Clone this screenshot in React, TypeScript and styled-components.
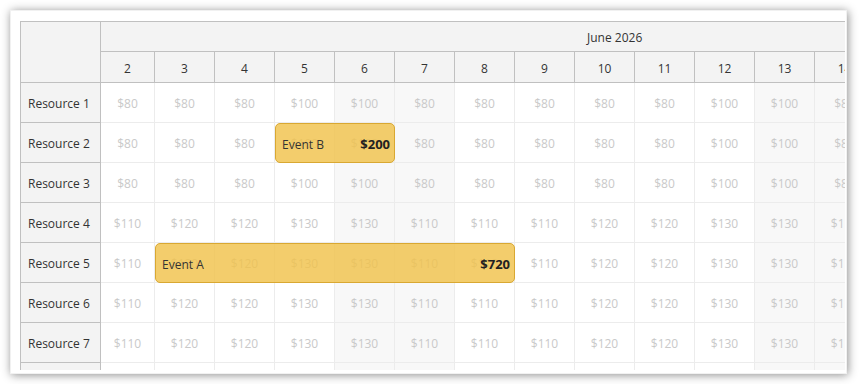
import React from 'react';
import styled, { createGlobalStyle, css } from 'styled-components';

const GlobalStyle = createGlobalStyle`
  body {
    margin: 0;
    background: #ffffff;
    font-family: "Open Sans", "Noto Sans", Arial, sans-serif;
  }
`;

const headerBorder = '#c0c0c0';
const cellBorder = '#ececec';
const headerBg = '#f3f3f3';

const COLUMNS = '80px 54px repeat(12, 60px)';

const DAYS = [2, 3, 4, 5, 6, 7, 8, 9, 10, 11, 12, 13, 14];
const WEEKEND = [6, 7, 13, 14];

const LOW = [80, 80, 80, 100, 100, 80, 80, 80, 80, 80, 100, 100, 80];
const HIGH = [110, 120, 120, 130, 130, 110, 110, 110, 120, 120, 130, 130, 110];

interface EventData {
  start: number;
  end: number;
  name: string;
  price: string;
}

const RESOURCES: { name: string; prices: number[]; event?: EventData }[] = [
  { name: 'Resource 1', prices: LOW },
  { name: 'Resource 2', prices: LOW, event: { start: 5, end: 6, name: 'Event B', price: '$200' } },
  { name: 'Resource 3', prices: LOW },
  { name: 'Resource 4', prices: HIGH },
  { name: 'Resource 5', prices: HIGH, event: { start: 3, end: 8, name: 'Event A', price: '$720' } },
  { name: 'Resource 6', prices: HIGH },
  { name: 'Resource 7', prices: HIGH },
  { name: 'Resource 8', prices: HIGH },
];

const Frame = styled.div`
  margin: 10px;
  width: 837px;
  height: 364px;
  box-sizing: border-box;
  padding: 11px 0 0 10px;
  background: #ffffff;
  border: 1px solid #f1f1f1;
  box-shadow: 1px 1px 9px rgba(0, 0, 0, 0.45);
`;

const Viewport = styled.div`
  width: 825px;
  height: 349px;
  overflow: hidden;
  box-sizing: border-box;
  border-left: 1px solid ${headerBorder};
  border-top: 1px solid ${headerBorder};
  margin-left: -1px;
  margin-top: -1px;
  font-size: 12px;
  color: #333333;
`;

const Header = styled.div`
  display: grid;
  grid-template-columns: ${COLUMNS};
  width: max-content;
`;

const Body = styled.div`
  width: max-content;
`;

const Corner = styled.div`
  grid-column: 1;
  grid-row: 1 / 3;
  background: ${headerBg};
  border-right: 1px solid ${headerBorder};
  border-bottom: 1px solid ${headerBorder};
`;

const MonthCell = styled.div`
  grid-column: 2 / -1;
  grid-row: 1;
  height: 30px;
  box-sizing: border-box;
  display: flex;
  align-items: center;
  padding: 2px 0 0 486px;
  background: ${headerBg};
  border-bottom: 1px solid ${headerBorder};
`;

const DayCell = styled.div<{ $col: number }>`
  grid-column: ${p => p.$col};
  grid-row: 2;
  height: 31px;
  box-sizing: border-box;
  display: flex;
  align-items: center;
  justify-content: center;
  padding-top: 2px;
  background: ${headerBg};
  border-right: 1px solid ${headerBorder};
  border-bottom: 1px solid ${headerBorder};
`;

const Row = styled.div`
  display: grid;
  grid-template-columns: ${COLUMNS};
  width: max-content;
`;

const ResourceCell = styled.div`
  grid-column: 1;
  grid-row: 1;
  height: 40px;
  box-sizing: border-box;
  display: flex;
  align-items: center;
  padding: 2px 0 0 7px;
  background: ${headerBg};
  border-right: 1px solid ${headerBorder};
  border-bottom: 1px solid ${headerBorder};
`;

const PriceCell = styled.div<{ $col: number; $weekend: boolean }>`
  grid-column: ${p => p.$col};
  grid-row: 1;
  height: 40px;
  box-sizing: border-box;
  display: flex;
  align-items: center;
  justify-content: center;
  padding-top: 2px;
  color: #c9c9c9;
  background: #ffffff;
  border-right: 1px solid ${cellBorder};
  border-bottom: 1px solid ${cellBorder};
  ${p =>
    p.$weekend &&
    css`
      background: #f8f8f8;
    `};
`;

const EventBox = styled.div<{ $start: number; $end: number }>`
  grid-column: ${p => p.$start} / ${p => p.$end + 1};
  grid-row: 1;
  z-index: 1;
  height: 40px;
  box-sizing: border-box;
  display: flex;
  align-items: center;
  justify-content: space-between;
  padding: 2px 4px 0 6px;
  background: rgba(240, 194, 76, 0.82);
  border: 1px solid #d9a832;
  border-radius: 5px;
  color: #333333;
`;

const EventName = styled.span`
  font-size: 12px;
`;

const EventPrice = styled.span`
  font-size: 13px;
  font-weight: 700;
  color: #222222;
`;

export default function App() {
  return (
    <>
      <GlobalStyle />
      <Frame>
        <Viewport>
          <Header>
            <Corner />
            <MonthCell>June 2026</MonthCell>
            {DAYS.map(d => (
              <DayCell key={d} $col={d}>
                {d}
              </DayCell>
            ))}
          </Header>
          <Body>
            {RESOURCES.map(r => (
              <Row key={r.name}>
                <ResourceCell>{r.name}</ResourceCell>
                {DAYS.map((d, i) => (
                  <PriceCell key={d} $col={d} $weekend={WEEKEND.includes(d)}>
                    ${r.prices[i]}
                  </PriceCell>
                ))}
                {r.event && (
                  <EventBox $start={r.event.start} $end={r.event.end}>
                    <EventName>{r.event.name}</EventName>
                    <EventPrice>{r.event.price}</EventPrice>
                  </EventBox>
                )}
              </Row>
            ))}
          </Body>
        </Viewport>
      </Frame>
    </>
  );
}
